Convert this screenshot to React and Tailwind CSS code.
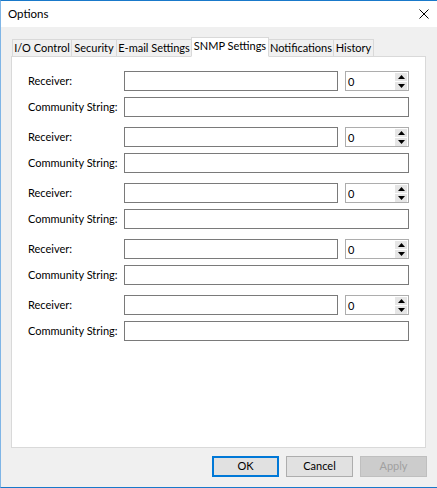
import React from 'react';

const tabs = [
  { t: 'I/O Control', w: 'w-[60px]' },
  { t: 'Security', w: 'w-[46px]' },
  { t: 'E-mail Settings', w: 'w-[76px]' },
  { t: 'SNMP Settings', w: 'w-[78px]' },
  { t: 'Notifications', w: 'w-[66px]' },
  { t: 'History', w: 'w-[41px]' },
];

function Spin() {
  return (
    <div className="w-[64px] h-[20px] border border-[#adadad] bg-white flex items-center justify-between pl-[2px] pr-[1px]">
      <span className="text-[11px] leading-none text-black">0</span>
      <div className="flex flex-col gap-[1px] w-[12px]">
        <div className="h-[8px] bg-[#e6e6e6] flex items-center justify-center">
          <svg width="7" height="4" viewBox="0 0 7 4"><path d="M3.5 0 L7 4 L0 4 Z" fill="#000" /></svg>
        </div>
        <div className="h-[8px] bg-[#e6e6e6] flex items-center justify-center">
          <svg width="7" height="4" viewBox="0 0 7 4"><path d="M0 0 L7 0 L3.5 4 Z" fill="#000" /></svg>
        </div>
      </div>
    </div>
  );
}

function Group() {
  return (
    <div className="flex flex-col gap-[6px]">
      <div className="flex items-center">
        <span className="w-[96px] whitespace-nowrap text-[11px] text-black">Receiver:</span>
        <div className="w-[214px] h-[20px] border border-[#7a7a7a] bg-white" />
        <div className="ml-[7px]"><Spin /></div>
      </div>
      <div className="flex items-center">
        <span className="w-[96px] whitespace-nowrap text-[11px] text-black">Community String:</span>
        <div className="w-[285px] h-[20px] border border-[#7a7a7a] bg-white" />
      </div>
    </div>
  );
}

export default function App() {
  return (
    <div
      className="w-[437px] h-[488px] flex flex-col bg-[#f0f0f0] border-t border-b border-l border-t-[#1979ca] border-b-[#1979ca] border-l-[#7fb5e6] overflow-hidden"
      style={{ fontFamily: 'Lato, sans-serif' }}
    >
      {/* Title bar */}
      <div className="h-[26px] bg-white flex items-center justify-between pl-[7px] pr-[8px] shrink-0">
        <span className="text-[11.5px] text-black">Options</span>
        <svg width="10" height="10" viewBox="0 0 10 10">
          <path d="M0.5 0.5 L9.5 9.5 M9.5 0.5 L0.5 9.5" stroke="#000" strokeWidth="1" />
        </svg>
      </div>

      {/* Tabs + panel */}
      <div className="ml-[10px] mt-[10px] w-[415px] flex flex-col">
        <div className="flex items-end pl-[1px] h-[19px]">
          {tabs.map(({ t, w }, i) => {
            const active = t === 'SNMP Settings';
            return (
              <div
                key={t}
                className={
                  (active
                    ? 'h-[20px] -mb-[1px] relative z-10 bg-white border border-[#d9d9d9] border-b-white pb-[2px] '
                    : 'h-[17px] bg-[#f0f0f0] border border-[#d9d9d9] border-b-0 ') +
                  (i > 0 ? '-ml-[1px] ' : '') +
                  w +
                  ' flex items-center justify-center whitespace-nowrap text-[11px] text-black'
                }
              >
                {t}
              </div>
            );
          })}
        </div>
        <div className="h-[392px] bg-white border border-[#d9d9d9] pt-[14px] pl-[16px] flex flex-col gap-[10px]">
          <Group />
          <Group />
          <Group />
          <Group />
          <Group />
        </div>
      </div>

      {/* Buttons */}
      <div className="flex justify-end gap-[7px] mt-[8px] pr-[10px]">
        <button className="w-[67px] h-[21px] bg-[#e1e1e1] border-2 border-[#0078d7] text-[11px] text-black flex items-center justify-center">OK</button>
        <button className="w-[67px] h-[21px] bg-[#e1e1e1] border border-[#adadad] text-[11px] text-black flex items-center justify-center">Cancel</button>
        <button className="w-[67px] h-[21px] bg-[#cccccc] border border-[#bfbfbf] text-[11px] text-[#a0a0a0] flex items-center justify-center">Apply</button>
      </div>
    </div>
  );
}
